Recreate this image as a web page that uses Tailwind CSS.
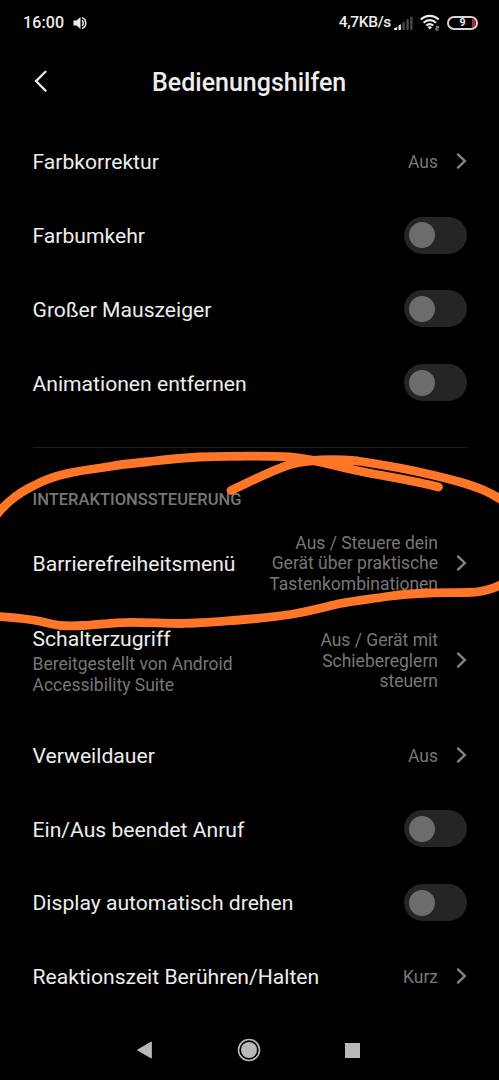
<!DOCTYPE html>
<html lang="de">
<head>
<meta charset="utf-8">
<title>Bedienungshilfen</title>
<script src="https://cdn.jsdelivr.net/npm/@tailwindcss/browser@4"></script>
</head>
<body class="bg-black">
<div class="relative flex h-[1080px] w-[499px] flex-col overflow-hidden bg-black font-['Roboto',sans-serif] text-[#ededed]">
  <svg class="hidden"><defs>
    <symbol id="chev" viewBox="0 0 12 18"><path d="M3 2.400 9.800 9 3 15.600" fill="none" stroke="#858585" stroke-width="2.400" stroke-linecap="round"/></symbol>
  </defs></svg>

  <header class="flex h-[45px] shrink-0 items-center pr-[21px] pl-[23px]">
    <span class="text-[16px] font-medium tracking-[0.1px]">16:00</span>
    <svg class="ml-[9px] h-[14px] w-[14px]" viewBox="0 0 14 14"><path d="M.5 4.500h3L7.500 1v12l-4-3.500h-3z" fill="#ededed"/><path d="M9 4.200c1.600 1.200 1.600 4.400 0 5.600M9 1.600c5 1.600 5 9.200 0 10.800" fill="none" stroke="#ededed" stroke-width="1.500"/></svg>
    <span class="ml-auto pt-[1px] text-[15.500px] font-medium tracking-[-0.350px]">4,7KB/s</span>
    <svg class="ml-[3px] h-[14px] w-[19px]" viewBox="0 0 19 14"><path d="M0 12.500 3.200 10.800V14H0zM4.500 9.500 6.900 8.300V14H4.500z" fill="#ededed"/><path d="M8.300 6.500l2.400-.8V14H8.300zM12.300 3.500l2.400-.8V14h-2.400zM16.200 1l2.400-.8V14h-2.400z" fill="#484848"/></svg>
    <svg class="ml-[7px] h-[17px] w-[20px]" viewBox="0 0 20 17"><g fill="none" stroke="#ededed" stroke-width="2.100"><path d="M.8 5.500C6 .6 13.500.6 18.800 5.500M3.600 8.700c3.600-3.500 8.800-3.500 12.400 0M6.400 11.600c2-2 4.800-2 6.800 0"/></g><path d="M7.500 13q2.300-1.400 4.600 0L9.800 15.500z" fill="#ededed"/><path d="M16 12.500h2.500v1.500H16v2h2.500" stroke="#a5a5a5" stroke-width="1" fill="none"/></svg>
    <span class="relative ml-[7px] flex h-[14px] w-[31px] items-center justify-center overflow-hidden rounded-full border-[2px] border-[#d4d4d4] text-[10.500px] font-bold"><span class="absolute top-[1px] right-[0px] h-[8px] w-[4px] rounded-r-[3px] bg-[#b52535]"></span>9</span>
  </header>

  <div class="flex h-[79.500px] shrink-0 items-center pl-[33px]">
    <svg class="mt-[-8px] h-[24px] w-[15px]" viewBox="0 0 15 24"><path d="M12.500 2.700 3 12.100l9.500 9.500" fill="none" stroke="#e8e8e8" stroke-width="2.300" stroke-linecap="round"/></svg>
    <h1 class="mt-[-5px] ml-[104px] text-[25px] font-medium">Bedienungshilfen</h1>
  </div>

  <main class="flex flex-col pr-[32px] pl-[32.500px] text-[21.130px]">
    <div class="flex h-[73.800px] items-center"><span class="pt-[1px]">Farbkorrektur</span><span class="ml-auto pt-[2px] text-[17.500px] text-[#777]">Aus</span><svg class="ml-[17px] h-[18px] w-[12px]"><use href="#chev"/></svg></div>
    <div class="flex h-[73.800px] items-center justify-between"><span class="pt-[1px]">Farbumkehr</span><span class="flex h-[37px] w-[63px] items-center rounded-full bg-[#252525] pl-[5px]"><i class="size-[26px] rounded-full bg-[#6c6c6c]"></i></span></div>
    <div class="flex h-[73.800px] items-center justify-between"><span class="pt-[1px]">Großer Mauszeiger</span><span class="flex h-[37px] w-[63px] items-center rounded-full bg-[#252525] pl-[5px]"><i class="size-[26px] rounded-full bg-[#6c6c6c]"></i></span></div>
    <div class="flex h-[73.800px] items-center justify-between"><span class="pt-[2px]">Animationen entfernen</span><span class="flex h-[37px] w-[63px] items-center rounded-full bg-[#252525] pl-[5px]"><i class="size-[26px] rounded-full bg-[#6c6c6c]"></i></span></div>
    <hr class="mt-[27px] border-0 border-t border-[#1c1c1c]">
    <h2 class="mt-[41px] h-[26px] text-[16.550px] leading-[22px] font-medium text-[#777]">INTERAKTIONSSTEUERUNG</h2>
    <div class="flex h-[97px] items-center"><span class="pt-[1px]">Barrierefreiheitsmenü</span><span class="ml-auto pt-[1px] text-right text-[17.500px] leading-[20.500px] text-[#777]">Aus / Steuere dein<br>Gerät über praktische<br>Tastenkombinationen</span><svg class="ml-[17px] h-[18px] w-[12px]"><use href="#chev"/></svg></div>
    <div class="mb-[9px] flex h-[97.500px] items-center"><div><div class="leading-[27px]">Schalterzugriff</div><div class="pt-[2px] text-[17.500px] leading-[20.500px] text-[#777]">Bereitgestellt von Android<br>Accessibility Suite</div></div><span class="ml-auto pt-[1px] text-right text-[17.500px] leading-[20.500px] text-[#777]">Aus / Gerät mit<br>Schiebereglern<br>steuern</span><svg class="ml-[17px] h-[18px] w-[12px]"><use href="#chev"/></svg></div>
    <div class="flex h-[73.800px] items-center"><span class="pt-[1px]">Verweildauer</span><span class="ml-auto pt-[2px] text-[17.500px] text-[#777]">Aus</span><svg class="ml-[17px] h-[18px] w-[12px]"><use href="#chev"/></svg></div>
    <div class="flex h-[73.800px] items-center justify-between"><span class="pt-[1px]">Ein/Aus beendet Anruf</span><span class="flex h-[37px] w-[63px] items-center rounded-full bg-[#252525] pl-[5px]"><i class="size-[26px] rounded-full bg-[#6c6c6c]"></i></span></div>
    <div class="flex h-[73.800px] items-center justify-between"><span class="pt-[1px]">Display automatisch drehen</span><span class="flex h-[37px] w-[63px] items-center rounded-full bg-[#252525] pl-[5px]"><i class="size-[26px] rounded-full bg-[#6c6c6c]"></i></span></div>
    <div class="flex h-[73.800px] items-center"><span class="pt-[1px]">Reaktionszeit Berühren/Halten</span><span class="ml-auto pt-[2px] text-[17.500px] text-[#777]">Kurz</span><svg class="ml-[17px] h-[18px] w-[12px]"><use href="#chev"/></svg></div>
  </main>

  <nav class="mt-auto flex h-[60px] shrink-0 items-center justify-between pr-[139px] pl-[136px]">
    <svg class="h-[18px] w-[17px]" viewBox="0 0 17 18"><path d="M1.500 9 15.300 1v16z" fill="#b9b9b9" stroke="#b9b9b9" stroke-linejoin="round"/></svg>
    <svg class="size-[24px]" viewBox="0 0 24 24"><circle cx="12" cy="12" r="10.500" fill="none" stroke="#b9b9b9" stroke-width="1.600"/><circle cx="12" cy="12" r="8" fill="#b9b9b9"/></svg>
    <i class="size-[15px] bg-[#b9b9b9]"></i>
  </nav>

  <svg class="absolute inset-0 h-[1080px] w-[499px]" viewBox="0 0 499 1080" fill="none" stroke="#ff7629" stroke-width="8.800" stroke-linecap="round" stroke-linejoin="round">
    <path d="M-5 517C2 507 16 494 33 486C44 480 56 476 67 473.500C78 471 89 469.500 100 468C117 465 133 463 150 461.500C167 459.500 183 458 200 457C230 456 265 455.500 290 457C312 459 325 463 350 469C375 475 410 479.500 438.500 487"/>
    <path d="M231 490.500C252 481 270 471 290 464.500C310 459 330 458.500 358 461C372 463 386 465.500 400 468C420 472 440 476.500 460 482C480 488 490 492 504 501.500"/>
    <path d="M504 583C493 589.500 480 592.500 467 592.500C455 592.800 442 592.500 430 593C415 593.500 401 594.500 387 596.500C371 599 356 600.500 340 603.500C323 607.500 307 612 290 614.500C271 617.500 252 619 233 620.500C215 622 198 623.500 180 623.500C159 623.500 138 621.500 117 622.800C104 623.500 92 625.500 83 625.500C75 626 67 626 60 625.500C51 624 42 621.500 33 620C22 618.500 11 617 -5 616.500"/>
  </svg>
</div>
</body>
</html>
